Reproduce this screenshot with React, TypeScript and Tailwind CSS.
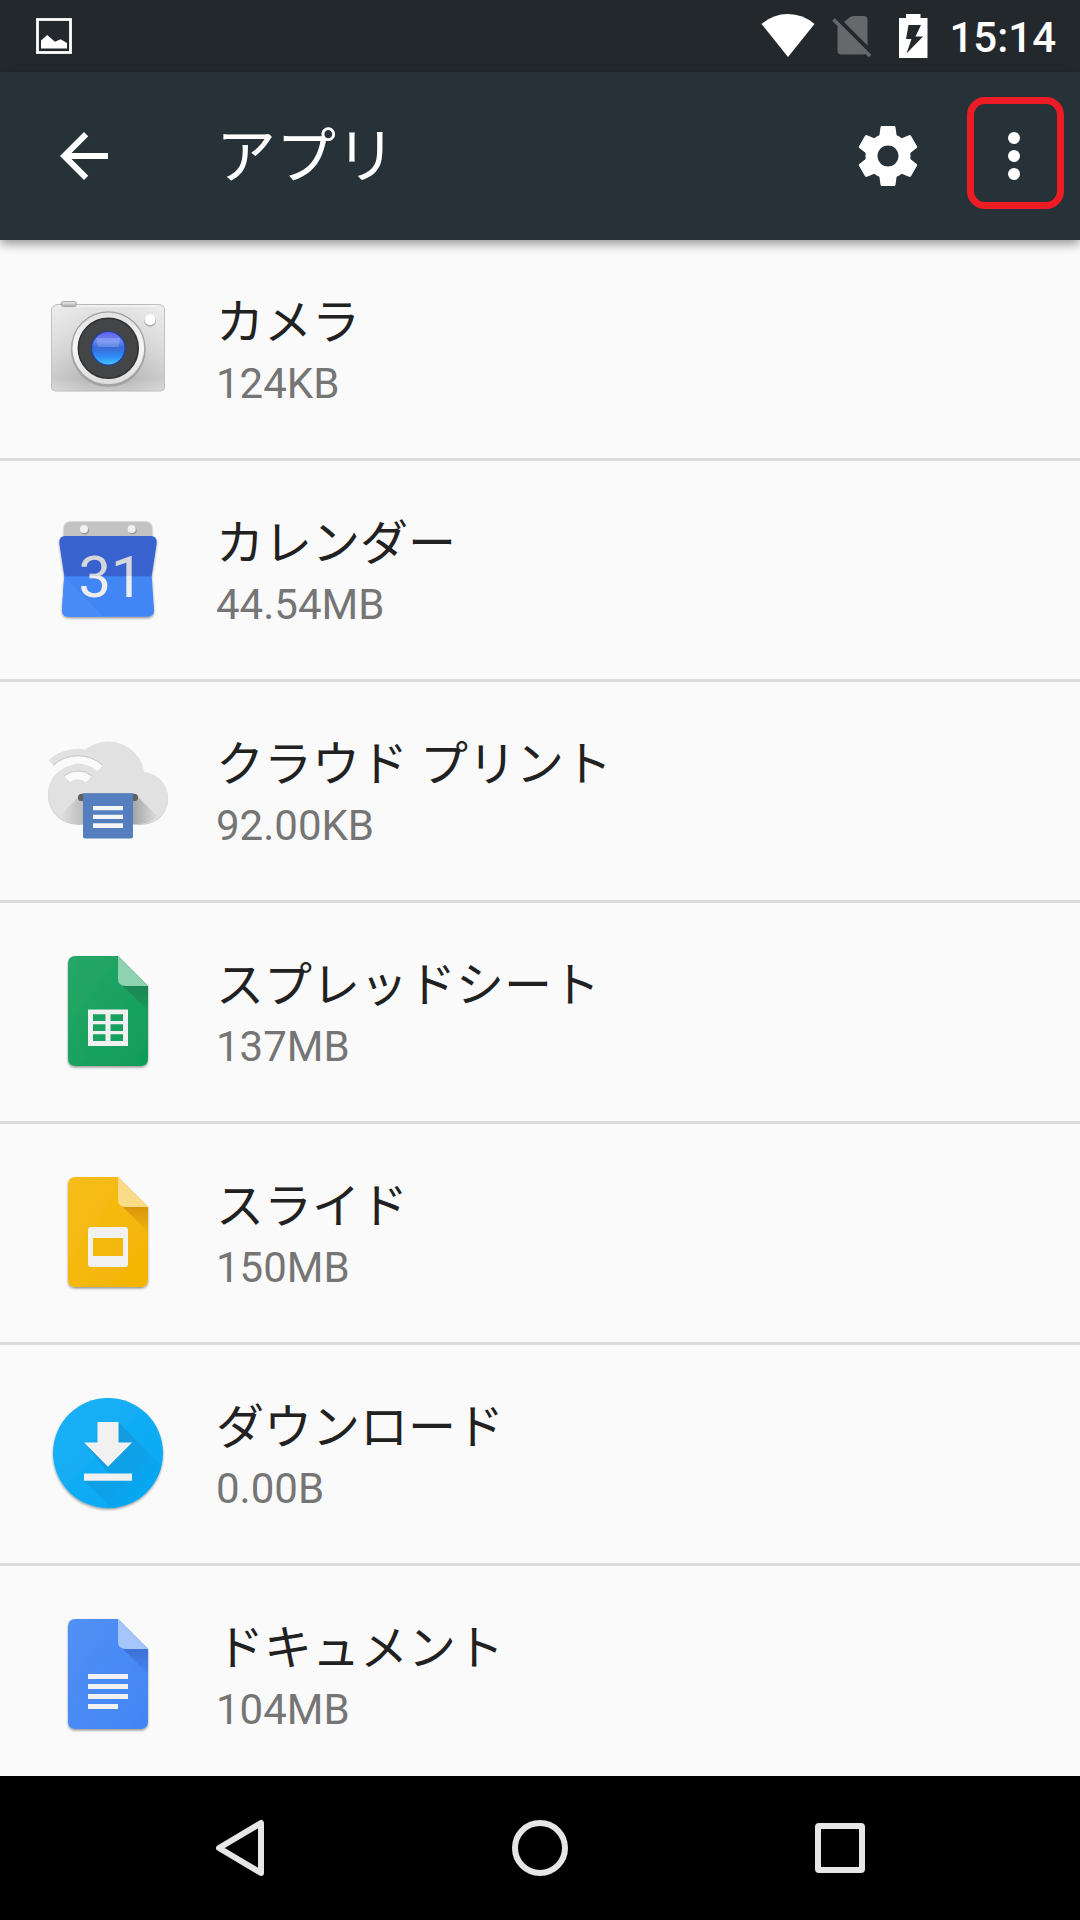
import React from "react";

function CameraIcon() {
  return (
    <svg viewBox="0 0 120 120" className="h-[120px] w-[120px] shrink-0" aria-hidden="true">
      <defs>
        <linearGradient id="cam-body" x1="0" y1="0" x2="0" y2="1">
          <stop offset="0" stopColor="#e6e6e6" />
          <stop offset="0.45" stopColor="#d0d0d0" />
          <stop offset="0.85" stopColor="#b6b6b6" />
          <stop offset="1" stopColor="#c9c9c9" />
        </linearGradient>
        <linearGradient id="cam-side" x1="0" y1="0" x2="1" y2="0">
          <stop offset="0" stopColor="#fff" stopOpacity="0.3" />
          <stop offset="0.35" stopColor="#fff" stopOpacity="0" />
          <stop offset="0.65" stopColor="#fff" stopOpacity="0" />
          <stop offset="1" stopColor="#fff" stopOpacity="0.3" />
        </linearGradient>
        <linearGradient id="cam-ring" x1="0" y1="0" x2="0" y2="1">
          <stop offset="0" stopColor="#e2e2e2" />
          <stop offset="0.5" stopColor="#f6f6f6" />
          <stop offset="1" stopColor="#dcdcdc" />
        </linearGradient>
        <linearGradient id="cam-lens" x1="0" y1="0" x2="0" y2="1">
          <stop offset="0" stopColor="#6a5fe6" />
          <stop offset="0.3" stopColor="#6488f0" />
          <stop offset="0.48" stopColor="#3a68d6" />
          <stop offset="0.75" stopColor="#2f8df5" />
          <stop offset="1" stopColor="#45c8ff" />
        </linearGradient>
        <linearGradient id="cam-btn" x1="0" y1="0" x2="0" y2="1">
          <stop offset="0" stopColor="#f2f2f2" />
          <stop offset="1" stopColor="#a8a8a8" />
        </linearGradient>
      </defs>
      <path d="M8 15.500H112Q116.500 17 116.500 20V98Q116.500 102 112.500 102H7.500Q3.500 102 3.500 98V20Q4 18.500 8 15.500Z" fill="url(#cam-body)" stroke="#b6b6b6" />
      <path d="M8 15.500H112Q116.500 17 116.500 20V98Q116.500 102 112.500 102H7.500Q3.500 102 3.500 98V20Q4 18.500 8 15.500Z" fill="url(#cam-side)" />
      <path d="M10 17H110" stroke="#f4f4f4" strokeWidth="1.500" />
      <rect x="13" y="12.500" width="15.500" height="5" rx="2.500" fill="url(#cam-btn)" stroke="#a6a6a6" />
      <circle cx="60.300" cy="60.500" r="37.500" fill="#8f8f8f" opacity="0.6" />
      <circle cx="60.300" cy="59.300" r="36.500" fill="url(#cam-ring)" stroke="#a2a2a2" strokeWidth="1.200" />
      <circle cx="60.300" cy="59.300" r="30" fill="#434546" stroke="#2e3031" strokeWidth="1.500" />
      <circle cx="60.300" cy="59.300" r="16.800" fill="url(#cam-lens)" stroke="#1f3ea5" strokeWidth="1.200" />
      <path d="M48.500 49H72L70.500 58H50Z" fill="#fff" opacity="0.18" />
      <circle cx="102" cy="31.700" r="6" fill="#a8a8a8" />
      <circle cx="102" cy="30.700" r="5.500" fill="#fff" />
    </svg>
  );
}

function CalendarIcon() {
  return (
    <svg viewBox="0 0 120 120" className="h-[120px] w-[120px] shrink-0" aria-hidden="true">
      <defs>
        <linearGradient id="cal-digits" x1="0" y1="0" x2="0" y2="120" gradientUnits="userSpaceOnUse">
          <stop offset="0.5525" stopColor="#d5d7db" />
          <stop offset="0.5525" stopColor="#eeeeee" />
        </linearGradient>
        <filter id="cal-shadow" x="-10%" y="-10%" width="120%" height="125%">
          <feDropShadow dx="0" dy="1.500" stdDeviation="1.300" floodOpacity="0.4" />
        </filter>
      </defs>
      <g filter="url(#cal-shadow)">
        <path d="M16 30V18Q16 11.500 22.500 11.500H97.500Q104 11.500 104 18V30Z" fill="#c3c3c3" />
        <path d="M16.300 66H103.700L106 100Q106 106.700 99.500 106.700H20.500Q14 106.700 14 100Z" fill="#4285f4" />
        <path d="M17 26H103Q109 26 108.700 33L103.700 66.300H16.300L11.300 33Q11 26 17 26Z" fill="#3763cf" />
      </g>
      <path d="M16.300 66.300L55 106.700H20.500Q14 106.700 14 100Z" fill="#4a8cf7" />
      <circle cx="37" cy="20.500" r="4" fill="#9c9c9c" />
      <circle cx="84.700" cy="20.500" r="4" fill="#9c9c9c" />
      <circle cx="36" cy="19" r="4" fill="#f1f1f1" />
      <circle cx="83.700" cy="19" r="4" fill="#f1f1f1" />
      <text x="63" y="87" textAnchor="middle" fontSize="58" fill="url(#cal-digits)" className="font-['Roboto',sans-serif]">
        31
      </text>
    </svg>
  );
}

function CloudPrintIcon() {
  return (
    <svg viewBox="0 0 120 120" className="h-[120px] w-[120px] shrink-0" aria-hidden="true">
      <defs>
        <linearGradient id="cp-right" x1="85" y1="0" x2="110" y2="0" gradientUnits="userSpaceOnUse">
          <stop offset="0" stopColor="#a5a5a5" />
          <stop offset="1" stopColor="#dedede" />
        </linearGradient>
        <linearGradient id="cp-left" x1="35" y1="0" x2="12" y2="0" gradientUnits="userSpaceOnUse">
          <stop offset="0" stopColor="#bcbcbc" />
          <stop offset="1" stopColor="#e2e2e2" />
        </linearGradient>
      </defs>
      <g fill="#c6c6c6" transform="translate(0 0.800)">
        <circle cx="29.800" cy="63.200" r="29.800" />
        <circle cx="94" cy="67" r="26" />
        <rect x="29" y="70" width="65" height="23" />
      </g>
      <g fill="#e1e1e1">
        <circle cx="60.300" cy="47" r="36.500" />
        <circle cx="29.800" cy="63.200" r="29.800" />
        <circle cx="94" cy="67" r="26" />
        <rect x="29" y="60" width="65" height="33" />
        <path d="M0.300 29.200A43.700 43.700 0 0 1 38 18.600L54.700 34.200A37 37 0 0 0 5.300 34.200Z" />
      </g>
      <path d="M85 66H90L109 85Q103 93 92 93H85Z" fill="url(#cp-right)" />
      <path d="M35 66H30L12 85Q18 93 28 93H35Z" fill="url(#cp-left)" />
      <path d="M5.300 34.200A37 37 0 0 1 54.700 34.200L49.300 40.200A29 29 0 0 0 10.100 40.200Z" fill="#fafafa" />
      <path d="M5.300 34.200A37 37 0 0 1 54.700 34.200" fill="none" stroke="#c4c4c4" />
      <path d="M16 45A21.700 21.700 0 0 1 44 45L38 51Q29.800 45.500 22 51Z" fill="#fafafa" />
      <path d="M16 45A21.700 21.700 0 0 1 44 45" fill="none" stroke="#c4c4c4" />
      <rect x="30" y="62.700" width="60" height="7.300" rx="3.600" fill="#616161" />
      <path d="M35 62.300H85V105.500Q85 107.600 83 107.600H37Q35 107.600 35 105.500Z" fill="#557ebf" />
      <path d="M45 75H75V79.300H45ZM45 83.700H75V88H45ZM45 92.300H75V97H45Z" fill="#f5f5f5" />
    </svg>
  );
}

type FileProps = {
  id: string;
  from: string;
  to: string;
  fold: string;
  shade: string;
  children: React.ReactNode;
};

function FileIcon({ id, from, to, fold, shade, children }: FileProps) {
  return (
    <svg viewBox="0 0 120 120" className="h-[120px] w-[120px] shrink-0" aria-hidden="true">
      <defs>
        <linearGradient id={`${id}-page`} x1="0" y1="0" x2="1" y2="1">
          <stop offset="0" stopColor={from} />
          <stop offset="1" stopColor={to} />
        </linearGradient>
        <linearGradient id={`${id}-shade`} x1="0" y1="0" x2="0" y2="1">
          <stop offset="0" stopColor={shade} />
          <stop offset="1" stopColor={shade} stopOpacity="0.15" />
        </linearGradient>
        <filter id={`${id}-shadow`} x="-10%" y="-10%" width="120%" height="120%">
          <feDropShadow dx="0" dy="1.500" stdDeviation="1.300" floodOpacity="0.4" />
        </filter>
      </defs>
      <path
        d="M27.500 4H70L100 34V106.500Q100 114 92.500 114H27.500Q20 114 20 106.500V11.500Q20 4 27.500 4Z"
        fill={`url(#${id}-page)`}
        filter={`url(#${id}-shadow)`}
      />
      <path d="M74 33L100 34V59Z" fill={`url(#${id}-shade)`} />
      <path d="M70 4L100 34H77.500Q70 34 70 26.500Z" fill={fold} />
      {children}
    </svg>
  );
}

function SheetsIcon() {
  return (
    <FileIcon id="sheets" from="#27a768" to="#0f9d58" fold="#8ed2b2" shade="#1c8353">
      <path
        fillRule="evenodd"
        fill="#f1f1f1"
        d="M40 57.500H80V94H40ZM45 62.300V69H57.500V62.300ZM62.500 62.300V69H75V62.300ZM45 72.300V79H57.500V72.300ZM62.500 72.300V79H75V72.300ZM45 82.300V89H57.500V82.300ZM62.500 82.300V89H75V82.300Z"
      />
    </FileIcon>
  );
}

function SlidesIcon() {
  return (
    <FileIcon id="slides" from="#f6bd1c" to="#f4b400" fold="#fadb87" shade="#d8950c">
      <path
        fillRule="evenodd"
        fill="#f1f1f1"
        d="M43 54H77Q80 54 80 57V91Q80 94 77 94H43Q40 94 40 91V57Q40 54 43 54ZM45 65V83H75V65Z"
      />
    </FileIcon>
  );
}

function DocsIcon() {
  return (
    <FileIcon id="docs" from="#5190f5" to="#4285f4" fold="#a6c5fa" shade="#3b6fd4">
      <path fill="#f1f1f1" d="M40 59H80V64H40ZM40 69H80V74H40ZM40 79H80V84H40ZM40 89H70V94H40Z" />
    </FileIcon>
  );
}

function DownloadIcon() {
  return (
    <svg viewBox="0 0 120 120" className="h-[120px] w-[120px] shrink-0" aria-hidden="true">
      <defs>
        <linearGradient id="dl-bg" x1="0" y1="0" x2="1" y2="1">
          <stop offset="0" stopColor="#1eb0f6" />
          <stop offset="1" stopColor="#03a9f4" />
        </linearGradient>
        <linearGradient id="dl-long" x1="50" y1="50" x2="95" y2="95" gradientUnits="userSpaceOnUse">
          <stop offset="0" stopColor="#1699dc" />
          <stop offset="1" stopColor="#08a7f2" />
        </linearGradient>
        <clipPath id="dl-clip">
          <circle cx="60" cy="59" r="55" />
        </clipPath>
        <filter id="dl-shadow" x="-10%" y="-10%" width="120%" height="120%">
          <feDropShadow dx="0" dy="1.500" stdDeviation="1.300" floodOpacity="0.4" />
        </filter>
      </defs>
      <circle cx="60" cy="59" r="55" fill="url(#dl-bg)" filter="url(#dl-shadow)" />
      <g clipPath="url(#dl-clip)" fill="url(#dl-long)">
        <path d="M70.300 28L130 88V140H90L36 86.700L60 79L36 48.300L60 60Z" />
      </g>
      <path d="M49.500 28H70.500V48.500H84L60 72.700L36 48.500H49.500ZM36 79.500H84V86.700H36Z" fill="#f1f1f1" />
    </svg>
  );
}

const apps = [
  { name: "カメラ", size: "124KB", Icon: CameraIcon },
  { name: "カレンダー", size: "44.54MB", Icon: CalendarIcon },
  { name: "クラウド プリント", size: "92.00KB", Icon: CloudPrintIcon },
  { name: "スプレッドシート", size: "137MB", Icon: SheetsIcon },
  { name: "スライド", size: "150MB", Icon: SlidesIcon },
  { name: "ダウンロード", size: "0.00B", Icon: DownloadIcon },
  { name: "ドキュメント", size: "104MB", Icon: DocsIcon },
];

function StatusBar() {
  return (
    <div className="flex h-[72px] shrink-0 items-center justify-between bg-[#23282c] pr-6 pl-9 text-white">
      <svg viewBox="0 0 36 36" className="h-9 w-9" aria-label="スクリーンショット" role="img">
        <rect x="1.500" y="1.500" width="33" height="33" fill="none" stroke="#fff" strokeWidth="2.800" />
        <path d="M5 30.500V22.500L11.200 17L19 23.800L24.500 21.200L31 25V30.500Z" fill="#fff" />
      </svg>
      <div className="flex items-center">
        <svg viewBox="0 0 54 44" className="h-11 w-[54px]" aria-label="Wi-Fi" role="img">
          <path d="M0.500 10Q12 0 27 0T53.500 10L27 43Z" fill="#fff" />
        </svg>
        <svg viewBox="0 0 40 44" className="ml-[17px] h-11 w-10" aria-label="SIM なし" role="img">
          <path d="M12 8L17.500 3.500Q19 2 21.500 2H31.500Q35.500 2 35.500 6V31.500Z" fill="#66696c" />
          <path d="M5.500 10.500L34 39Q33 40.500 31 40.500H9.500Q5.500 40.500 5.500 36.500Z" fill="#66696c" />
          <path d="M1.500 5.500L38 42" stroke="#66696c" strokeWidth="3.600" />
        </svg>
        <svg viewBox="0 0 30 44" className="ml-[26px] h-11 w-[30px]" aria-label="充電中" role="img">
          <path
            fillRule="evenodd"
            fill="#fff"
            d="M8 0H22.500V4H29.500V44H1V4H8ZM10.500 11L8 25H13.500L8.500 39.500L25 22.500H17.500L23 11Z"
          />
        </svg>
        <time className="ml-[21px] pt-1 font-['Roboto',sans-serif] text-[42px] leading-none font-medium">15:14</time>
      </div>
    </div>
  );
}

function AppBar() {
  return (
    <header className="relative z-10 flex h-[168px] shrink-0 items-center bg-[#273238] pr-[30px] pl-12 text-white shadow-[0_4px_10px_rgba(0,0,0,0.4)]">
      <button type="button" aria-label="戻る">
        <svg viewBox="0 0 24 24" className="h-[72px] w-[72px]" fill="currentColor">
          <path d="M20 11H7.830l5.590-5.590L12 4l-8 8 8 8 1.410-1.410L7.830 13H20v-2z" />
        </svg>
      </button>
      <h1 className="ml-24 flex-1 pt-1 text-[60px] leading-[80px]">アプリ</h1>
      <button type="button" aria-label="設定">
        <svg viewBox="0 0 24 24" className="h-[72px] w-[72px]" fill="currentColor">
          <path d="M19.430 12.980c.04-.32.07-.64.07-.98s-.03-.66-.07-.98l2.110-1.650c.19-.15.24-.42.12-.64l-2-3.460c-.12-.22-.39-.3-.61-.22l-2.490 1c-.52-.4-1.080-.73-1.690-.98l-.38-2.650C14.460 2.180 14.250 2 14 2h-4c-.25 0-.46.18-.49.42l-.38 2.650c-.61.25-1.170.59-1.690.98l-2.490-1c-.23-.09-.49 0-.61.22l-2 3.460c-.13.22-.07.49.12.64l2.110 1.650c-.04.32-.07.65-.07.98s.03.66.07.98l-2.110 1.650c-.19.15-.24.42-.12.64l2 3.460c.12.22.39.3.61.22l2.490-1c.52.4 1.080.73 1.690.98l.38 2.650c.03.24.24.42.49.42h4c.25 0 .46-.18.49-.42l.38-2.650c.61-.25 1.170-.59 1.690-.98l2.490 1c.23.09.49 0 .61-.22l2-3.460c.12-.22.07-.49-.12-.64l-2.110-1.650zM12 15.500c-1.930 0-3.500-1.570-3.500-3.500s1.570-3.500 3.500-3.500 3.500 1.570 3.500 3.500-1.570 3.500-3.500 3.500z" />
        </svg>
      </button>
      <button type="button" aria-label="その他のオプション" className="relative ml-[54px]">
        <svg viewBox="0 0 24 24" className="h-[72px] w-[72px]" fill="currentColor">
          <circle cx="12" cy="6" r="2" />
          <circle cx="12" cy="12" r="2" />
          <circle cx="12" cy="18" r="2" />
        </svg>
        <span className="pointer-events-none absolute -top-[23px] -right-[14px] -bottom-[17px] -left-[11px] rounded-[18px] border-[7px] border-[#ed1c24]" />
      </button>
    </header>
  );
}

function NavBar() {
  return (
    <nav className="grid h-36 shrink-0 grid-cols-3 items-center bg-black px-[90px]">
      <button type="button" aria-label="戻る" className="flex justify-center">
        <svg viewBox="0 0 60 60" className="h-[60px] w-[60px]" fill="none" stroke="#e6e6e6" strokeWidth="6" strokeLinejoin="round">
          <path d="M51 5V55L9 30Z" />
        </svg>
      </button>
      <button type="button" aria-label="ホーム" className="flex justify-center">
        <svg viewBox="0 0 60 60" className="h-[60px] w-[60px]" fill="none" stroke="#e6e6e6" strokeWidth="6">
          <circle cx="30" cy="30" r="25" />
        </svg>
      </button>
      <button type="button" aria-label="最近使ったアプリ" className="flex justify-center">
        <svg viewBox="0 0 60 60" className="h-[60px] w-[60px]" fill="none" stroke="#e6e6e6" strokeWidth="6">
          <rect x="8" y="8" width="44" height="44" rx="1" />
        </svg>
      </button>
    </nav>
  );
}

export default function App() {
  return (
    <div lang="ja" className="flex h-screen flex-col bg-[#fafafa] font-['Roboto','Noto_Sans_CJK_JP',sans-serif]">
      <StatusBar />
      <AppBar />
      <main className="min-h-0 flex-1 overflow-y-auto [scrollbar-width:none]">
        <ul>
          {apps.map(({ name, size, Icon }) => (
            <li key={name} className="border-b-[3px] border-[#dadada]">
              <button type="button" className="flex h-[218px] w-full items-center gap-12 px-12 text-left">
                <Icon />
                <span className="flex flex-col pt-[6px]">
                  <span className="text-[48px] leading-[64px] text-[#212121]">{name}</span>
                  <span className="text-[42px] leading-[58px] text-[#757575]">{size}</span>
                </span>
              </button>
            </li>
          ))}
        </ul>
      </main>
      <NavBar />
    </div>
  );
}
